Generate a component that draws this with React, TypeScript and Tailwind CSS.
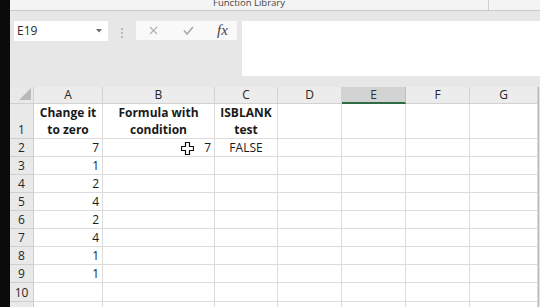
import React from 'react';

const font = { fontFamily: '"Open Sans", "Noto Sans", sans-serif' };

const cols = ['A', 'B', 'C', 'D', 'E', 'F', 'G'];
const colAValues = ['7', '1', '2', '4', '2', '4', '1', '1', ''];

const Cell: React.FC<{ className?: string; children?: React.ReactNode }> = ({ className = '', children }) => (
  <div className={`border-r border-b border-[#dcdcdc] bg-white text-[12px] text-[#1a1a1a] flex items-end ${className}`}>
    {children}
  </div>
);

const RowHead: React.FC<{ n: number; className?: string }> = ({ n, className = '' }) => (
  <div className={`bg-[#e9e9e9] border-r border-b border-[#cfcfcf] text-[12px] text-[#262626] flex items-end justify-center ${className}`}>
    <span className="leading-[17px]">{n}</span>
  </div>
);

export default function App() {
  return (
    <div className="w-[540px] h-[307px] overflow-hidden flex bg-black" style={font}>
      <div className="w-[10px] shrink-0 bg-[#0b0b0b]" />
      <div className="flex-1 flex flex-col bg-[#e7e7e7] overflow-hidden">
        {/* ribbon group label */}
        <div className="h-[11px] shrink-0 bg-[#f4f4f4] border-b border-[#c9c9c9] flex">
          <div className="flex-1 flex justify-center overflow-hidden">
            <span className="text-[9.5px] leading-[8px] text-[#444] -mt-[1px]">Function Library</span>
          </div>
          <div className="w-[52px] border-l border-[#cfcfcf]" />
        </div>

        {/* name box + formula bar */}
        <div className="flex items-start pt-[10px] h-[76px] shrink-0">
          <div className="ml-[4px] w-[94px] h-[20px] bg-white flex items-center justify-between pl-[3px] pr-[6px]">
            <span className="text-[12px] text-[#2b2b2b]">E19</span>
            <svg width="6" height="4" viewBox="0 0 6 4"><path d="M0 0h6L3 3.5z" fill="#6b6b6b" /></svg>
          </div>
          <div className="ml-[13px] mt-[7px] flex flex-col gap-[2px]">
            <div className="w-[2px] h-[2px] bg-[#b9b9b9]" />
            <div className="w-[2px] h-[2px] bg-[#b9b9b9]" />
            <div className="w-[2px] h-[2px] bg-[#b9b9b9]" />
          </div>
          <div className="ml-[13px] w-[101px] h-[19px] bg-[#f9f9f9] flex items-center">
            <svg className="ml-[13px]" width="9" height="9" viewBox="0 0 9 9">
              <path d="M1 1l7 7M8 1L1 8" stroke="#b0b0b0" strokeWidth="1.1" />
            </svg>
            <svg className="ml-[25px]" width="11" height="9" viewBox="0 0 11 9">
              <path d="M1 4.5l3 3.5L10 1" stroke="#a8a8a8" strokeWidth="1.6" fill="none" />
            </svg>
            <span
              className="ml-[23px] text-[15px] italic text-[#444] leading-none"
              style={{ fontFamily: '"Liberation Serif", serif' }}
            >
              fx
            </span>
          </div>
          <div className="ml-[5px] flex-1 h-[55px] bg-white" />
        </div>

        {/* sheet */}
        <div className="shrink-0 grid grid-cols-[24px_69px_112px_63px_64px_64px_64px_68px_1fr] grid-rows-[17px_35px_18px_18px_18px_18px_18px_18px_18px_18px_19px_20px]">
          {/* header row */}
          <div className="bg-[#e9e9e9] border-r border-b border-[#cfcfcf] flex items-end justify-end pr-[2px] pb-[3px]">
            <svg width="12" height="12" viewBox="0 0 12 12"><path d="M12 0v12H0z" fill="#b9b9b9" /></svg>
          </div>
          {cols.map((c) => (
            <div
              key={c}
              className={
                c === 'E'
                  ? 'bg-[#d3d3d3] border-r border-[#bdbdbd] border-b-2 border-b-[#2f6a47] flex items-center justify-center text-[12px] text-[#333]'
                  : 'bg-[#ececec] border-r border-b border-[#d2d2d2] flex items-center justify-center text-[12px] text-[#262626]'
              }
            >
              {c}
            </div>
          ))}
          <div className="bg-[#e4e4e4] border-l border-[#b8b8b8]" />

          {/* row 1 */}
          <RowHead n={1} />
          <Cell className="justify-center font-bold leading-[17px] text-center text-[11.5px]">
            <span>Change it<br />to zero</span>
          </Cell>
          <Cell className="justify-center font-bold leading-[17px] text-center text-[11.5px]">
            <span>Formula with<br />condition</span>
          </Cell>
          <Cell className="justify-center font-bold leading-[17px] text-center text-[11.5px]">
            <span>ISBLANK<br />test</span>
          </Cell>
          <Cell />
          <Cell />
          <Cell />
          <Cell />
          <div className="bg-[#e4e4e4] border-l border-[#b8b8b8]" />

          {/* row 2 */}
          <RowHead n={2} />
          <Cell className="justify-end pr-[3px]"><span className="leading-[17px]">7</span></Cell>
          <Cell className="justify-end pr-[3px] relative">
            <svg className="absolute left-[78px] top-[3px]" width="13" height="13" viewBox="0 0 13 13">
              <path
                d="M4.5 0.5h4v4h4v4h-4v4h-4v-4h-4v-4h4z"
                fill="#fff"
                stroke="#111"
                strokeWidth="1.2"
              />
            </svg>
            <span className="leading-[17px]">7</span>
          </Cell>
          <Cell className="justify-center"><span className="leading-[17px]">FALSE</span></Cell>
          <Cell />
          <Cell />
          <Cell />
          <Cell />
          <div className="bg-[#e4e4e4] border-l border-[#b8b8b8]" />

          {/* rows 3-11 */}
          {colAValues.slice(1).concat(['']).map((v, i) => (
            <React.Fragment key={i}>
              <RowHead n={i + 3} />
              <Cell className="justify-end pr-[3px]"><span className="leading-[17px]">{v}</span></Cell>
              <Cell />
              <Cell />
              <Cell />
              <Cell />
              <Cell />
              <Cell />
              <div className="bg-[#e4e4e4] border-l border-[#b8b8b8]" />
            </React.Fragment>
          ))}
        </div>
      </div>
    </div>
  );
}
